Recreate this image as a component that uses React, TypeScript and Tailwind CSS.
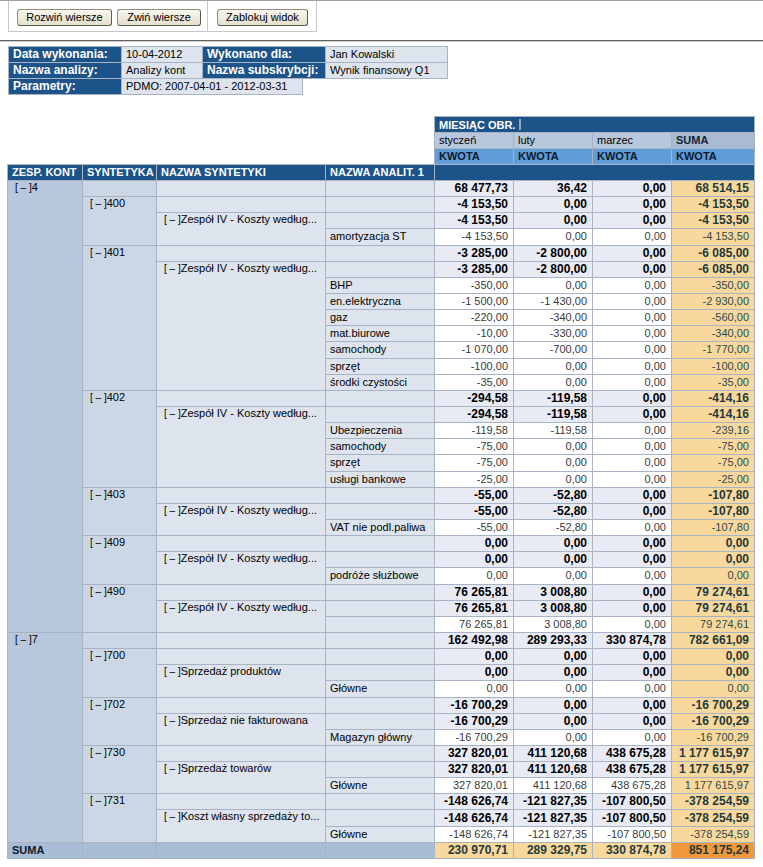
import React from 'react'

type Vals = [string, string, string, string]

interface Syn {
  code: string
  total: Vals
  name: string
  leaves: [string, Vals][]
}

interface Group {
  code: string
  total: Vals
  syns: Syn[]
}

const Z: Vals = ['0,00', '0,00', '0,00', '0,00']
const IV = 'Zespół IV - Koszty według...'

const groups: Group[] = [
  {
    code: '4',
    total: ['68 477,73', '36,42', '0,00', '68 514,15'],
    syns: [
      {
        code: '400',
        total: ['-4 153,50', '0,00', '0,00', '-4 153,50'],
        name: IV,
        leaves: [['amortyzacja ST', ['-4 153,50', '0,00', '0,00', '-4 153,50']]],
      },
      {
        code: '401',
        total: ['-3 285,00', '-2 800,00', '0,00', '-6 085,00'],
        name: IV,
        leaves: [
          ['BHP', ['-350,00', '0,00', '0,00', '-350,00']],
          ['en.elektryczna', ['-1 500,00', '-1 430,00', '0,00', '-2 930,00']],
          ['gaz', ['-220,00', '-340,00', '0,00', '-560,00']],
          ['mat.biurowe', ['-10,00', '-330,00', '0,00', '-340,00']],
          ['samochody', ['-1 070,00', '-700,00', '0,00', '-1 770,00']],
          ['sprzęt', ['-100,00', '0,00', '0,00', '-100,00']],
          ['środki czystości', ['-35,00', '0,00', '0,00', '-35,00']],
        ],
      },
      {
        code: '402',
        total: ['-294,58', '-119,58', '0,00', '-414,16'],
        name: IV,
        leaves: [
          ['Ubezpieczenia', ['-119,58', '-119,58', '0,00', '-239,16']],
          ['samochody', ['-75,00', '0,00', '0,00', '-75,00']],
          ['sprzęt', ['-75,00', '0,00', '0,00', '-75,00']],
          ['usługi bankowe', ['-25,00', '0,00', '0,00', '-25,00']],
        ],
      },
      {
        code: '403',
        total: ['-55,00', '-52,80', '0,00', '-107,80'],
        name: IV,
        leaves: [['VAT nie podl.paliwa', ['-55,00', '-52,80', '0,00', '-107,80']]],
      },
      {
        code: '409',
        total: Z,
        name: IV,
        leaves: [['podróże służbowe', Z]],
      },
      {
        code: '490',
        total: ['76 265,81', '3 008,80', '0,00', '79 274,61'],
        name: IV,
        leaves: [['', ['76 265,81', '3 008,80', '0,00', '79 274,61']]],
      },
    ],
  },
  {
    code: '7',
    total: ['162 492,98', '289 293,33', '330 874,78', '782 661,09'],
    syns: [
      { code: '700', total: Z, name: 'Sprzedaż produktów', leaves: [['Główne', Z]] },
      {
        code: '702',
        total: ['-16 700,29', '0,00', '0,00', '-16 700,29'],
        name: 'Sprzedaż nie fakturowana',
        leaves: [['Magazyn główny', ['-16 700,29', '0,00', '0,00', '-16 700,29']]],
      },
      {
        code: '730',
        total: ['327 820,01', '411 120,68', '438 675,28', '1 177 615,97'],
        name: 'Sprzedaż towarów',
        leaves: [['Główne', ['327 820,01', '411 120,68', '438 675,28', '1 177 615,97']]],
      },
      {
        code: '731',
        total: ['-148 626,74', '-121 827,35', '-107 800,50', '-378 254,59'],
        name: 'Koszt własny sprzedaży to...',
        leaves: [['Główne', ['-148 626,74', '-121 827,35', '-107 800,50', '-378 254,59']]],
      },
    ],
  },
]

const bd = 'border border-[#a8b4c6]'
const lbl = `${bd} bg-[#1c5388] pl-1 text-[12px] font-bold text-white`
const val = `${bd} bg-[#dde4ee] pl-[4px]`

// the little [ – ] expander in front of every tree label
function Toggle({ label }: { label: string }) {
  return (
    <span className="whitespace-nowrap">
      <span className="ml-[3px] whitespace-pre text-[10px]">[ – ]</span>
      {label}
    </span>
  )
}

function Values({ v, bold }: { v: Vals; bold: boolean }) {
  return (
    <>
      {v.slice(0, 3).map((x, i) => (
        <td
          key={i}
          className={`${bd} pr-[5px] text-right ${
            bold ? 'bg-[#e8ebf4] text-[12px] font-bold text-black' : 'bg-white text-[#3a3a3a]'
          }`}
        >
          {x}
        </td>
      ))}
      <td
        className={`${bd} bg-[#f9d89e] pr-[5px] text-right ${
          bold ? 'text-[12px] font-bold text-[#1e3a3a]' : 'text-[#2f4a4a]'
        }`}
      >
        {v[3]}
      </td>
    </>
  )
}

function groupRows(g: Group) {
  const count = 1 + g.syns.reduce((n, s) => n + 2 + s.leaves.length, 0)
  const rows: React.ReactNode[] = []
  rows.push(
    <tr key={g.code} className="h-[16.15px]">
      <td rowSpan={count} className={`${bd} bg-[#b8c8dc] pl-1 align-top`}>
        <Toggle label={g.code} />
      </td>
      <td className={`${bd} bg-[#cbd7e5]`} />
      <td className={`${bd} bg-[#dde4ee]`} />
      <td className={`${bd} bg-[#dde4ee]`} />
      <Values v={g.total} bold />
    </tr>
  )
  g.syns.forEach((s) => {
    rows.push(
      <tr key={s.code} className="h-[16.15px]">
        <td rowSpan={2 + s.leaves.length} className={`${bd} bg-[#cbd7e5] pl-1 align-top`}>
          <Toggle label={s.code} />
        </td>
        <td className={`${bd} bg-[#dde4ee]`} />
        <td className={`${bd} bg-[#dde4ee]`} />
        <Values v={s.total} bold />
      </tr>
    )
    rows.push(
      <tr key={s.code + 'n'} className="h-[16.15px]">
        <td rowSpan={1 + s.leaves.length} className={`${bd} bg-[#dde4ee] pl-1 align-top`}>
          <Toggle label={s.name} />
        </td>
        <td className={`${bd} bg-[#dde4ee]`} />
        <Values v={s.total} bold />
      </tr>
    )
    s.leaves.forEach(([name, v], i) => {
      rows.push(
        <tr key={s.code + 'l' + i} className="h-[16.15px]">
          <td className={`${bd} bg-[#dde4ee] pl-1 whitespace-nowrap`}>{name}</td>
          <Values v={v} bold={false} />
        </tr>
      )
    })
  })
  return rows
}

function XpButton({ children, w }: { children: React.ReactNode; w: string }) {
  return (
    <button
      className={`${w} h-[17px] rounded-[3px] border border-[#8c8c80] border-r-[#5c5c50] border-b-[#5c5c50] bg-gradient-to-b from-[#f8f6ee] to-[#e4e0cc] text-[11px] leading-[15px] text-black`}
    >
      {children}
    </button>
  )
}

export default function App() {
  return (
    <div className="min-h-[867px] w-[763px] border-t border-[#a0a0a0] bg-white font-['Liberation_Sans',Arial,sans-serif] text-[11px] leading-[13px] text-black">
      <div className="ml-2 flex h-[31px] w-[309px] border-x border-b border-[#c8c8c8]">
        <div className="flex w-[198px] items-start gap-[5px] pl-2 pt-2">
          <XpButton w="w-[95px]">Rozwiń wiersze</XpButton>
          <XpButton w="w-[84px]">Zwiń wiersze</XpButton>
        </div>
        <div className="flex items-start border-l border-[#c8c8c8] pl-[9px] pt-2">
          <XpButton w="w-[91px]">Zablokuj widok</XpButton>
        </div>
      </div>

      <div className="mt-[8px] h-[2px] border-t border-[#606060] border-b border-b-[#d0d0d0]" />

      <div className="ml-2 mt-[4px]">
        <table className="table-fixed border-collapse">
          <tbody>
            <tr className="h-[16px]">
              <td className={`${lbl} w-[113px]`}>Data wykonania:</td>
              <td className={`${val} w-[81px]`}>10-04-2012</td>
              <td className={`${lbl} w-[123px]`}>Wykonano dla:</td>
              <td className={`${val} w-[122px]`}>Jan Kowalski</td>
            </tr>
            <tr className="h-[16px]">
              <td className={lbl}>Nazwa analizy:</td>
              <td className={val}>Analizy kont</td>
              <td className={lbl}>Nazwa subskrybcji:</td>
              <td className={val}>Wynik finansowy Q1</td>
            </tr>
          </tbody>
        </table>
        <table className="-mt-px table-fixed border-collapse">
          <tbody>
            <tr className="h-[16px]">
              <td className={`${lbl} w-[113px]`}>Parametry:</td>
              <td className={`${val} w-[181px]`}>PDMO: 2007-04-01 - 2012-03-31</td>
            </tr>
          </tbody>
        </table>
      </div>

      <table className="ml-[7px] mt-[21px] table-fixed border-collapse">
        <colgroup>
          <col className="w-[75px]" />
          <col className="w-[74px]" />
          <col className="w-[169px]" />
          <col className="w-[109px]" />
          <col className="w-[79px]" />
          <col className="w-[79px]" />
          <col className="w-[79px]" />
          <col className="w-[83px]" />
        </colgroup>
        <tbody>
          <tr className="h-[16px]">
            <td colSpan={4} rowSpan={3} className="border-0" />
            <td colSpan={4} className={`${bd} bg-[#1c5388] pl-1 font-bold text-white`}>
              MIESIĄC OBR.
              <span className="ml-[4px] inline-block h-[11px] w-[2px] translate-y-[1px] bg-[#9aa8b8]" />
            </td>
          </tr>
          <tr className="h-[16px]">
            <td className={`${bd} bg-[#b8c8dc] pl-1`}>styczeń</td>
            <td className={`${bd} bg-[#b8c8dc] pl-1`}>luty</td>
            <td className={`${bd} bg-[#b8c8dc] pl-1`}>marzec</td>
            <td className={`${bd} bg-[#a9bad2] pl-1 font-bold text-[#14243a]`}>SUMA</td>
          </tr>
          <tr className="h-[16px]">
            {['a', 'b', 'c', 'd'].map((k) => (
              <td key={k} className={`${bd} bg-[#5f9cd8] pl-1 font-bold text-[#0c1a2c]`}>
                KWOTA
              </td>
            ))}
          </tr>
          <tr className="h-[16px] bg-[#1c5388] font-bold text-white">
            <td className={`${bd} pl-1`}>ZESP. KONT</td>
            <td className={`${bd} pl-1`}>SYNTETYKA</td>
            <td className={`${bd} pl-1`}>NAZWA SYNTETYKI</td>
            <td className={`${bd} pl-1`}>NAZWA ANALIT. 1</td>
            <td colSpan={4} className={bd} />
          </tr>
          {groups.map((g) => groupRows(g))}
          <tr className="h-[16.5px]">
            <td className={`${bd} bg-[#a9bcd6] pl-1 font-bold text-[#0c1a2c]`}>SUMA</td>
            <td className={`${bd} bg-[#a9bcd6]`} />
            <td className={`${bd} bg-[#a9bcd6]`} />
            <td className={`${bd} bg-[#a9bcd6]`} />
            {['230 970,71', '289 329,75', '330 874,78'].map((x) => (
              <td key={x} className={`${bd} bg-[#f9d89e] pr-[5px] text-right text-[12px] font-bold text-[#1e3a3a]`}>
                {x}
              </td>
            ))}
            <td className={`${bd} bg-[#f0983a] pr-[5px] text-right text-[12px] font-bold text-[#1e3a3a]`}>
              851 175,24
            </td>
          </tr>
        </tbody>
      </table>
    </div>
  )
}
